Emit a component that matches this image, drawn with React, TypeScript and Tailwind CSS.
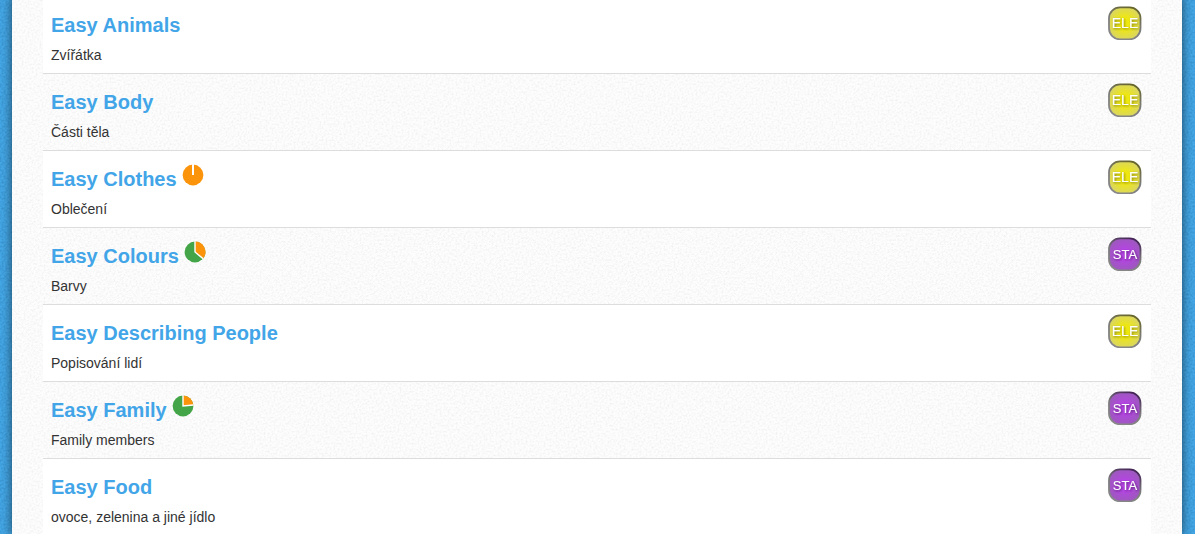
import React from 'react';
import clsx from 'clsx';

type Level = 'ELE' | 'STA';

interface Lesson {
  title: string;
  description: string;
  level: Level;
  // share of the lesson still left to learn, 0 - 1
  remaining?: number;
}

const lessons: Lesson[] = [
  { title: 'Easy Animals', description: 'Zvířátka', level: 'ELE' },
  { title: 'Easy Body', description: 'Části těla', level: 'ELE' },
  { title: 'Easy Clothes', description: 'Oblečení', level: 'ELE', remaining: 1 },
  { title: 'Easy Colours', description: 'Barvy', level: 'STA', remaining: 0.36 },
  { title: 'Easy Describing People', description: 'Popisování lidí', level: 'ELE' },
  { title: 'Easy Family', description: 'Family members', level: 'STA', remaining: 0.235 },
  { title: 'Easy Food', description: 'ovoce, zelenina a jiné jídlo', level: 'STA' },
];

const levels = {
  ELE: { name: 'Elementary', inner: '#efe80f', outer: '#d3d07c', shade: '#77750f', rim: '#66652c', fontSize: 14 },
  STA: { name: 'Starter', inner: '#b445e2', outer: '#9560b0', shade: '#4d1769', rim: '#452558', fontSize: 13 },
};

const Grain: React.FC<{ id: string; matrix: string }> = ({ id, matrix }) => (
  <svg className="absolute inset-0 w-full h-full pointer-events-none" aria-hidden="true">
    <filter id={id} x="0" y="0" width="100%" height="100%" colorInterpolationFilters="sRGB">
      <feTurbulence type="fractalNoise" baseFrequency="0.5" numOctaves="2" stitchTiles="stitch" />
      <feColorMatrix type="matrix" values={matrix} />
    </filter>
    <rect width="100%" height="100%" filter={`url(#${id})`} />
  </svg>
);

const ProgressPie: React.FC<{ remaining: number }> = ({ remaining }) => {
  const angle = remaining * 2 * Math.PI;
  const x = 11 + 10.4 * Math.sin(angle);
  const y = 11 - 10.4 * Math.cos(angle);
  const full = remaining >= 1;

  return (
    <svg className="w-[22px] h-[22px] mb-[3px] shrink-0" viewBox="0 0 22 22" role="img" aria-label="Progress">
      <circle cx="11" cy="11" r="10.4" fill={full ? '#fb940b' : '#43a547'} />
      {!full && <path d={`M11 11V.6A10.4 10.4 0 0 1 ${x} ${y}Z`} fill="#fb940b" />}
      <path d={full ? 'M11 11V0' : `M11 0V11L${x} ${y}`} fill="none" stroke="#fff" strokeWidth={full ? 2 : 1.4} />
    </svg>
  );
};

const LevelBadge: React.FC<{ level: Level }> = ({ level }) => {
  const { name, inner, outer, shade, rim, fontSize } = levels[level];

  return (
    <svg className="block w-[35px] h-[35px]" viewBox="0 0 35 35" role="img" aria-label={name}>
      <defs>
        <radialGradient id={`fill-${level}`} cx="0.5" cy="0.5" r="0.65">
          <stop offset="0" stopColor={inner} />
          <stop offset="0.25" stopColor={inner} />
          <stop offset="1" stopColor={outer} />
        </radialGradient>
        <linearGradient id={`rim-${level}`} x1="0.7" y1="0" x2="0.3" y2="1">
          <stop offset="0" stopColor={rim} />
          <stop offset="0.5" stopColor="#7c7c7c" />
          <stop offset="1" stopColor="#888888" />
        </linearGradient>
        <filter id={`shadow-${level}`} x="-20%" y="-20%" width="150%" height="150%">
          <feDropShadow dx="1" dy="1" stdDeviation="0.8" floodColor={shade} floodOpacity="0.9" />
        </filter>
      </defs>
      <rect x="1" y="2.3" width="31.5" height="32" rx="11" fill={`url(#fill-${level})`} stroke={`url(#rim-${level})`} strokeWidth="1.8" />
      <text
        x="17"
        y="23"
        textAnchor="middle"
        fontSize={fontSize}
        fill="#fff"
        filter={`url(#shadow-${level})`}
        className="font-['Liberation_Sans',Arial,sans-serif]"
      >
        {level}
      </text>
    </svg>
  );
};

const LessonRow: React.FC<{ lesson: Lesson; striped: boolean }> = ({ lesson, striped }) => (
  <tr className={clsx('border-t border-[#dddddd]', striped && 'bg-white')}>
    <td className="p-2 align-top">
      <h4 className="flex items-end gap-[5px] h-5 my-2.5 text-[20px] leading-5 font-bold">
        <a href="#" className="text-[#42a5e8] hover:underline">{lesson.title}</a>
        {lesson.remaining !== undefined && <ProgressPie remaining={lesson.remaining} />}
      </h4>
      <p className="text-sm leading-5">{lesson.description}</p>
    </td>
    <td className="w-px p-2 align-top">
      <LevelBadge level={lesson.level} />
    </td>
  </tr>
);

export default function App() {
  return (
    <div className="relative h-screen overflow-hidden pr-px bg-[#45a9e8] font-['Liberation_Sans',Arial,sans-serif] text-[#333333]">
      <Grain id="grain-page" matrix="0 0 0 0 0  0 0 0 0 0.15  0 0 0 0 0.3  0.35 0 0 0 -0.12" />
      <main className="relative max-w-[1170px] min-h-full mx-auto px-[31px] bg-[#fdfdfd] shadow-[0_0_10px_rgba(0,0,0,0.6)]">
        <Grain id="grain-panel" matrix="0 0 0 0 0  0 0 0 0 0  0 0 0 0 0  0.11 0 0 0 -0.045" />
        <table className="relative w-full -mt-1 border-collapse">
          <tbody>
            {lessons.map((lesson, i) => (
              <LessonRow key={lesson.title} lesson={lesson} striped={i % 2 === 0} />
            ))}
          </tbody>
        </table>
      </main>
    </div>
  );
}
